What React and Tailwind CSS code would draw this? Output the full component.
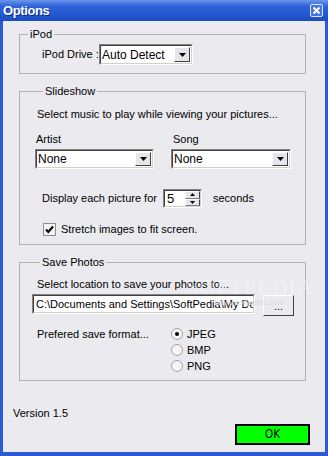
import React from 'react';

function DropArrow() {
  return (
    <svg width="7" height="4" viewBox="0 0 7 4">
      <path d="M0 0h7L3.5 4z" fill="#000" />
    </svg>
  );
}

function Combo({ value, className }) {
  return (
    <div className={`flex border border-t-[#848284] border-l-[#848284] border-r-white border-b-white ${className}`}>
      <div className="flex flex-1 border border-t-[#404040] border-l-[#404040] border-r-[#d4d0c8] border-b-[#d4d0c8] bg-white">
        <div className="flex-1 flex items-center pl-[1px] text-[12px]">{value}</div>
        <div className="w-[16px] m-[1px] flex items-center justify-center bg-[#e6e5e9] border border-t-white border-l-white border-r-[#404040] border-b-[#404040]">
          <DropArrow />
        </div>
      </div>
    </div>
  );
}

function Group({ title, className, children }) {
  return (
    <fieldset className={`border border-[#b2b1b5] ${className}`}>
      <legend className="ml-[8px] px-[2px] leading-[13px]">{title}</legend>
      {children}
    </fieldset>
  );
}

export default function App() {
  return (
    <div className="w-[328px] h-[456px] flex flex-col font-['Liberation_Sans',sans-serif] text-[11px] text-black relative overflow-hidden whitespace-nowrap">
      <div className="h-[21px] flex items-center justify-between pl-[3px] pr-[5px] bg-[linear-gradient(#6b97ea,#2e62d9_30%,#2458d2_70%,#1c4cc0)]">
        <span className="text-white font-bold text-[13px] tracking-[-0.4px] [text-shadow:1px_1px_#0d2a86]">Options</span>
        <div className="w-[13px] h-[13px] rounded-[2px] border border-[#dfe8fb] bg-[#3f75e6] flex items-center justify-center">
          <svg width="7" height="7" viewBox="0 0 7 7">
            <path d="M0.5 0.5l6 6M6.5 0.5l-6 6" stroke="#fff" strokeWidth="2" />
          </svg>
        </div>
      </div>

      <div className="flex-1 flex flex-col bg-[#ebeaee] border-x-[3px] border-b-[4px] border-[#2a5bd5] pl-[16px] pr-[19px]">
        <Group title="iPod" className="mt-[7px] pb-[8px]">
          <div className="flex items-center pl-[22px] pt-[3px]">
            <span className="w-[57px] shrink-0">iPod Drive :</span>
            <Combo value="Auto Detect" className="w-[94px] h-[21px]" />
          </div>
        </Group>

        <Group title="Slideshow" className="mt-[11px] pl-[15px] pb-[8px]">
          <p className="ml-[2px] mt-[10px] leading-[13px]">Select music to play while viewing your pictures...</p>
          <div className="flex gap-[17px] mt-[12px]">
            <div className="flex flex-col w-[119px]">
              <span className="ml-[1px] leading-[13px]">Artist</span>
              <Combo value="None" className="mt-[3px] h-[20px]" />
            </div>
            <div className="flex flex-col w-[120px]">
              <span className="ml-[2px] leading-[13px]">Song</span>
              <Combo value="None" className="mt-[3px] h-[20px]" />
            </div>
          </div>
          <div className="flex items-center ml-[7px] mt-[20px] leading-[13px]">
            <span className="w-[121px] shrink-0">Display each picture for</span>
            <div className="flex w-[39px] h-[19px] border border-t-[#848284] border-l-[#848284] border-r-white border-b-white">
              <div className="flex flex-1 border border-t-[#404040] border-l-[#404040] border-r-[#d4d0c8] border-b-[#d4d0c8] bg-white">
                <span className="flex-1 pl-[2px] text-[13px] leading-[15px]">5</span>
                <div className="w-[15px] flex flex-col">
                  {[0, 1].map(i => (
                    <div key={i} className="flex-1 flex items-center justify-center bg-[#e6e5e9] border border-t-white border-l-white border-r-[#404040] border-b-[#808080]">
                      <svg width="5" height="3" viewBox="0 0 5 3">
                        <path d={i === 0 ? 'M2.5 0L5 3H0z' : 'M0 0h5L2.5 3z'} fill="#000" />
                      </svg>
                    </div>
                  ))}
                </div>
              </div>
            </div>
            <span className="ml-[11px]">seconds</span>
          </div>
          <label className="flex items-center ml-[8px] mt-[15px] leading-[13px]">
            <div className="w-[13px] h-[13px] border border-[#8e8f8f] bg-[#f3f3f3] flex items-center justify-center">
              <svg width="9" height="9" viewBox="0 0 9 9">
                <path d="M1 4.5l2.3 2.5L8 1.5" stroke="#000" strokeWidth="2" fill="none" />
              </svg>
            </div>
            <span className="ml-[5px]">Stretch images to fit screen.</span>
          </label>
        </Group>

        <Group title="Save Photos" className="mt-[11px] pl-[12px] pb-[6px]">
          <p className="ml-[5px] mt-[9px] leading-[13px]">Select location to save your photos to...</p>
          <div className="flex items-start mt-[3px]">
            <div className="w-[223px] h-[20px] border border-t-[#848284] border-l-[#848284] border-r-white border-b-white">
              <div className="h-full border border-t-[#404040] border-l-[#404040] border-r-[#d4d0c8] border-b-[#d4d0c8] bg-white pl-[2px] leading-[16px] overflow-hidden">
                C:\Documents and Settings\SoftPedia\My Documents
              </div>
            </div>
            <button className="ml-[8px] mt-[1px] w-[31px] h-[21px] bg-[#ebeaee] border border-t-white border-l-white border-r-[#404040] border-b-[#404040] leading-[12px] flex items-end justify-center pb-[3px]">...</button>
          </div>
          <div className="flex mt-[10px]">
            <span className="ml-[5px] w-[134px] shrink-0 leading-[16px]">Prefered save format...</span>
            <div className="flex flex-col">
              {['JPEG', 'BMP', 'PNG'].map((f, i) => (
                <label key={f} className="flex items-center h-[16px]">
                  <div className="w-[12px] h-[12px] rounded-full border border-[#a3a3a3] bg-[#f4f4f4] flex items-center justify-center">
                    {i === 0 && <div className="w-[4px] h-[4px] rounded-full bg-black" />}
                  </div>
                  <span className="ml-[4px]">{f}</span>
                </label>
              ))}
            </div>
          </div>
        </Group>

        <div className="ml-[-6px] mt-[26px] leading-[13px]">Version 1.5</div>
        <div className="flex justify-end mr-[-4px] mt-[4px]">
          <button className="w-[75px] h-[21px] bg-[#00ff00] border-2 border-black text-[12px] leading-[17px] font-['Liberation_Sans_Narrow','DejaVu_Sans_Condensed',sans-serif]">OK</button>
        </div>
      </div>

      <div className="absolute left-[186px] top-[276px] pointer-events-none flex flex-col items-center text-white/35">
        <span className="font-['Liberation_Serif',serif] text-[22px] leading-[22px] tracking-[1px]">SOFTPEDIA</span>
        <span className="text-[8px] leading-[10px] text-[#dcdbe0]">www.softpedia.com</span>
      </div>
    </div>
  );
}
